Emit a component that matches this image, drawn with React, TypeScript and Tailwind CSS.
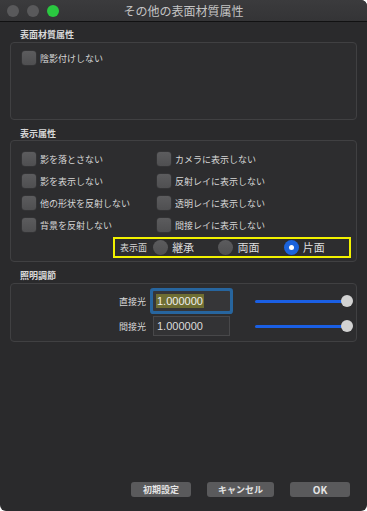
const font = {
  fontFamily: '"Noto Sans CJK JP", "Noto Sans", sans-serif',
};

function Check({ label }: { label: string }) {
  return (
    <div className="flex h-[22px] items-center gap-[4px]">
      <span className="h-[14px] w-[14px] shrink-0 rounded-[3px] bg-gradient-to-b from-[#5c5c5e] to-[#4f4f51] shadow-[0_0_0_0.5px_#3a3a3c]" />
      <span className="text-[9px] leading-none text-[#d6d6d6]">{label}</span>
    </div>
  );
}

function Radio({ label, on }: { label: string; on?: boolean }) {
  return (
    <div className="flex w-[67px] items-center gap-[4px]">
      {on ? (
        <span className="flex h-[15px] w-[15px] items-center justify-center rounded-full bg-[#1b63dc]">
          <span className="h-[5px] w-[5px] rounded-full bg-white" />
        </span>
      ) : (
        <span className="h-[15px] w-[15px] rounded-full bg-gradient-to-b from-[#5c5c5e] to-[#4f4f51]" />
      )}
      <span className="text-[11px] leading-none text-[#dedede]">{label}</span>
    </div>
  );
}

function Slider() {
  return (
    <div className="relative ml-[25px] h-[12px] w-[98px]">
      <div className="absolute left-0 right-[5px] top-[5px] h-[3px] rounded-full bg-[#1a5fe4]" />
      <div className="absolute right-0 top-0 h-[12px] w-[12px] rounded-full bg-[#d2d2d2]" />
    </div>
  );
}

export default function App() {
  return (
    <div className="h-[511px] w-[367px] bg-white" style={font}>
      <div className="flex h-full flex-col overflow-hidden rounded-tr-[6px] rounded-b-[6px] bg-[#2a2a2c]">
        {/* title bar */}
        <div className="relative flex h-[22px] shrink-0 items-center justify-center border-b border-[#111112] bg-gradient-to-b from-[#3b3b3d] to-[#343436]">
          <div className="absolute left-[7px] top-[5px] flex gap-[8px]">
            <span className="h-[12px] w-[12px] rounded-full bg-[#59595b]" />
            <span className="h-[12px] w-[12px] rounded-full bg-[#59595b]" />
            <span className="h-[12px] w-[12px] rounded-full bg-[#2ac840]" />
          </div>
          <span className="text-[12px] leading-none text-[#c4c4c4]">その他の表面材質属性</span>
        </div>

        <div className="flex flex-1 flex-col px-[10px]">
          {/* 表面材質属性 */}
          <div className="mt-[7px] pl-[10px] text-[9px] font-bold leading-[12px] text-[#d8d8d8]">表面材質属性</div>
          <div className="mt-[1px] h-[78px] rounded-[4px] border border-[#404042] bg-[#2d2d2f] px-[11px] pt-[4px]">
            <Check label="陰影付けしない" />
          </div>

          {/* 表示属性 */}
          <div className="mt-[8px] pl-[10px] text-[9px] font-bold leading-[12px] text-[#d8d8d8]">表示属性</div>
          <div className="h-[122px] rounded-[4px] border border-[#404042] bg-[#2d2d2f] pl-[11px] pt-[7px]">
            <div className="grid grid-cols-[135px_1fr]">
              <Check label="影を落とさない" />
              <Check label="カメラに表示しない" />
              <Check label="影を表示しない" />
              <Check label="反射レイに表示しない" />
              <Check label="他の形状を反射しない" />
              <Check label="透明レイに表示しない" />
              <Check label="背景を反射しない" />
              <Check label="間接レイに表示しない" />
            </div>
            <div className="ml-[91px] mt-[1px] flex h-[21px] w-[238px] items-center border-2 border-[#f2f200] pl-[5px]">
              <span className="w-[34px] text-[9px] leading-none text-[#d6d6d6]">表示面</span>
              <Radio label="継承" />
              <Radio label="両面" />
              <Radio label="片面" on />
            </div>
          </div>

          {/* 照明調節 */}
          <div className="mt-[8px] pl-[10px] text-[9px] font-bold leading-[12px] text-[#d8d8d8]">照明調節</div>
          <div className="mt-[1px] h-[59px] rounded-[4px] border border-[#404042] bg-[#2d2d2f] pt-[7px]">
            <div className="flex h-[20px] items-center">
              <span className="w-[135px] text-right text-[9px] leading-none text-[#d6d6d6]">直接光</span>
              <div className="ml-[7px] flex h-[20px] w-[77px] items-center rounded-[1px] bg-[#363638] pl-[3px] ring-[3px] ring-[#27659e]">
                <span
                  className="bg-[#6e6e33] px-[1px] text-[11px] leading-[14px] text-[#f0f0f0]"
                  style={{ fontFamily: '"Liberation Sans", Arial, sans-serif' }}
                >
                  1.000000
                </span>
              </div>
              <Slider />
            </div>
            <div className="mt-[5px] flex h-[20px] items-center">
              <span className="w-[135px] text-right text-[9px] leading-none text-[#d6d6d6]">間接光</span>
              <div className="ml-[7px] flex h-[20px] w-[77px] items-center border border-[#48484a] bg-[#333335] pl-[3px]">
                <span
                  className="text-[11px] leading-none text-[#dcdcdc]"
                  style={{ fontFamily: '"Liberation Sans", Arial, sans-serif' }}
                >
                  1.000000
                </span>
              </div>
              <Slider />
            </div>
          </div>

          {/* buttons */}
          <div className="mb-[14px] mt-auto flex justify-end gap-[16px] pr-[7px]">
            <button className="h-[15px] w-[60px] rounded-[3px] bg-[#5a5a5c] text-[9px] font-bold leading-none text-[#e4e4e4]">初期設定</button>
            <button className="h-[15px] w-[67px] rounded-[3px] bg-[#5a5a5c] text-[9px] font-bold leading-none text-[#e4e4e4]">キャンセル</button>
            <button className="h-[15px] w-[60px] rounded-[3px] bg-[#5a5a5c] text-[10px] font-bold leading-none text-[#e4e4e4]">OK</button>
          </div>
        </div>
      </div>
    </div>
  );
}
